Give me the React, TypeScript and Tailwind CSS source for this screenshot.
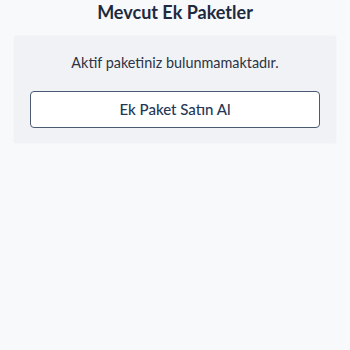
export default function App() {
  return (
    <div className="w-[350px] h-[350px] bg-[#f8f9fb] font-['Lato','Noto_Sans',sans-serif] flex flex-col items-center">
      <h1 className="mt-[1px] text-[18px] leading-[22px] font-bold text-[#1e2a3f]">Mevcut Ek Paketler</h1>
      <div className="mt-[13px] w-[322px] h-[107px] bg-[#f1f2f5] rounded-[3px] shadow-[0_0_2px_rgba(0,0,0,0.06)] flex flex-col items-center">
        <p className="mt-[17px] text-[14.4px] leading-[20px] text-[#2b3445]">Aktif paketiniz bulunmamaktadır.</p>
        <button className="mt-[18px] w-[290px] h-[37px] bg-white border-[1.5px] border-[#4b5a72] rounded-[4px] text-[15px] font-medium text-[#253656] flex items-center justify-center">
          Ek Paket Satın Al
        </button>
      </div>
    </div>
  );
}
